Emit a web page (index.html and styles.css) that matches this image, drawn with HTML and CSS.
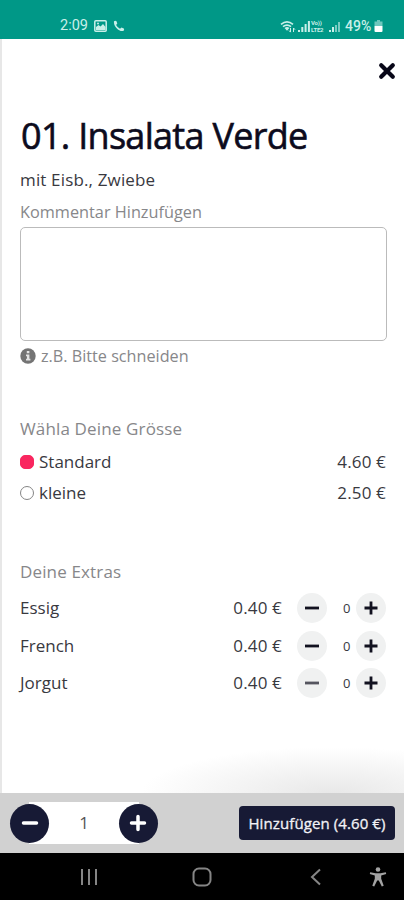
FILE: index.html
```html
<!DOCTYPE html>
<html lang="de">
<head>
<meta charset="utf-8">
<meta name="viewport" content="width=device-width, initial-scale=1">
<title>01. Insalata Verde</title>
<link rel="stylesheet" href="styles.css">
</head>
<body>
<header class="status">
  <span class="time">2:09</span>
  <svg class="photo" width="13" height="12" viewBox="0 0 13 12"><rect x=".8" y=".8" width="11.4" height="10.4" rx="1" fill="none" stroke="currentColor" stroke-width="1.5"/><path d="M2 10V7l2.500-2 2 1.500L9 4l2.500 3v3z" fill="currentColor"/><circle cx="4" cy="3.500" r="1" fill="currentColor"/></svg>
  <svg class="phone" width="12" height="12" viewBox="0 0 12 12"><path d="M1 1.300Q2.500.300 3.500 1.300l.8 2.200-1.200 1.400Q4.600 7.600 7 8.800l1.500-1.200 2.300.9q.8 1.200-.5 2.400C6.500 12.200.2 6.500 1 1.300z" fill="currentColor"/></svg>
  <span class="spacer"></span>
  <svg class="wifi" width="16" height="13" viewBox="0 0 16 13"><path d="M1 4.300Q7 -.5 13 4.300M3 6.600Q7 3.500 11 6.600" fill="none" stroke="currentColor" stroke-width="1.700"/><path d="M4.500 8Q7 6.200 9.500 8L7 10.800z" fill="currentColor"/><path d="M10.500 8v4M9 10.500l1.500 1.700M13.500 12V8m1.500 1.700L13.500 8" fill="none" stroke="currentColor"/></svg>
  <svg class="signal" width="12" height="12" viewBox="0 0 12 12" fill="currentColor"><path d="M0 10h2v2H0zM3.300 7h2v5h-2zM6.600 4h2v8h-2zM9.900 1h2v11h-2z"/></svg>
  <span class="volte"><span>Vo))</span><span>LTE2</span></span>
  <svg class="signal" width="12" height="12" viewBox="0 0 12 12" fill="currentColor"><path d="M1 10h2v2H1zM4 7h2v5H4z"/><path opacity=".6" d="M7 5h2v7H7zM10 2h2v10h-2z"/></svg>
  <span class="battery-text">49%</span>
  <svg class="battery" width="9" height="12" viewBox="0 0 9 12"><path opacity=".55" d="M3 0h3v1.500h2.500V6H.5V1.500H3z" fill="currentColor"/><path d="M.5 6h8v5q0 1-1 1h-6q-1 0-1-1z" fill="#fff"/></svg>
</header>

<main class="sheet">
  <button class="close" aria-label="Schließen"><svg width="18" height="18" viewBox="0 0 18 18"><path d="M3.200 3.200 14.800 14.800M14.800 3.200 3.200 14.800" stroke="currentColor" stroke-width="4.200" stroke-linecap="round"/></svg></button>
  <h1 class="title">01. Insalata Verde</h1>
  <p class="description">mit Eisb., Zwiebe</p>
  <label class="label comment-label" for="comment">Kommentar Hinzufügen</label>
  <textarea class="comment" id="comment"></textarea>
  <p class="hint"><svg width="16" height="16" viewBox="0 0 16 16"><circle cx="8" cy="8" r="7.700" fill="#747474"/><path d="M6.800 3h2.600v2.200H6.800zM6 6.500h3.400v4.300h1v1.700H6v-1.700h1V8.200H6z" fill="#e4e4e4"/></svg>z.B. Bitte schneiden</p>

  <h2 class="label size-label">Wähla Deine Grösse</h2>
  <div class="option"><span class="radio radio-on"></span><span class="name">Standard</span><span class="price">4.60 €</span></div>
  <div class="option"><span class="radio"></span><span class="name">kleine</span><span class="price">2.50 €</span></div>

  <h2 class="label extras-label">Deine Extras</h2>
  <div class="extra"><span class="name">Essig</span><span class="price">0.40 €</span><button class="step"><svg width="16" height="16" viewBox="0 0 16 16"><path d="M1 8h14"/></svg></button><span class="count">0</span><button class="step"><svg width="16" height="16" viewBox="0 0 16 16"><path d="M1.500 8h13M8 1.500v13"/></svg></button></div>
  <div class="extra"><span class="name">French</span><span class="price">0.40 €</span><button class="step"><svg width="16" height="16" viewBox="0 0 16 16"><path d="M1 8h14"/></svg></button><span class="count">0</span><button class="step"><svg width="16" height="16" viewBox="0 0 16 16"><path d="M1.500 8h13M8 1.500v13"/></svg></button></div>
  <div class="extra"><span class="name">Jorgut</span><span class="price">0.40 €</span><button class="step step-muted"><svg width="16" height="16" viewBox="0 0 16 16"><path d="M1 8h14"/></svg></button><span class="count">0</span><button class="step"><svg width="16" height="16" viewBox="0 0 16 16"><path d="M1.500 8h13M8 1.500v13"/></svg></button></div>
</main>

<footer class="cart">
  <div class="quantity">
    <button class="round"><svg width="18" height="18" viewBox="0 0 18 18"><path d="M2.500 9h13"/></svg></button>
    <span class="amount">1</span>
    <button class="round"><svg width="18" height="18" viewBox="0 0 18 18"><path d="M2.500 9h13M9 2.500v13"/></svg></button>
  </div>
  <button class="add">Hinzufügen (4.60 €)</button>
</footer>

<nav class="system">
  <svg width="18" height="18" viewBox="0 0 18 18"><path d="M2 1v16M9 1v16M16 1v16"/></svg>
  <svg width="20" height="20" viewBox="0 0 20 20"><rect x="1.500" y="1.500" width="17" height="17" rx="5.500"/></svg>
  <svg width="12" height="18" viewBox="0 0 12 18"><path d="M10 1.500 2 9l8 7.500"/></svg>
  <svg class="person" width="18" height="20" viewBox="0 0 18 20"><circle cx="9" cy="2.500" r="2.300"/><path d="M1.200 5.200 6.500 6.200h5l5.300-1 .4 1.900-5 1.300v3.300l2.500 7-1.900.8L9.800 13.500H8.200L5.200 19.500l-1.900-.8 2.500-7V8.400L.8 7.100z"/></svg>
</nav>
</body>
</html>
```
FILE: styles.css
```css
* { box-sizing: border-box; }
body {
  margin: 0;
  width: 404px;
  height: 900px;
  display: flex;
  flex-direction: column;
  overflow: hidden;
  background: #fff;
  color: #39393f;
  font: 17px/24px "Open Sans", "Noto Sans", sans-serif;
}
h1, h2, p { margin: 0; font-weight: 400; }
button { border: 0; padding: 0; font: inherit; color: inherit; background: none; display: flex; align-items: center; justify-content: center; }
svg { display: block; flex: none; }

.status {
  height: 39px;
  flex: none;
  display: flex;
  align-items: center;
  padding: 13px 21px 0 60px;
  background: #009887;
  color: #c9efe9;
  font: 14.500px/20px Roboto, sans-serif;
}
.time { width: 34px; }
.phone { margin-left: 6px; }
.spacer { flex: 1; }
.signal { margin-left: 2px; }
.volte { display: flex; flex-direction: column; width: 15px; margin-left: 1px; font-size: 6px; line-height: 7px; font-weight: 700; letter-spacing: -.2px; }
.battery-text { width: 29px; margin-left: 5px; font-weight: 500; font-size: 14px; }

.sheet {
  height: 754px;
  flex: none;
  display: flex;
  flex-direction: column;
  padding: 22px 18px 0 18px;
  border-left: 2px solid #e7e7e7;
  background: radial-gradient(ellipse 190px 46px at 330px 100%, #e8e8e8, #fff);
}
.close { align-self: flex-end; width: 18px; height: 18px; margin-right: -10px; margin-top: 1px; color: #080718; }
.title { margin: 31px 0 0 1px; height: 50px; line-height: 50px; font-size: 36px; letter-spacing: -.7px; color: #0c0b1d; -webkit-text-stroke: .6px #0c0b1d; white-space: nowrap; }
.description { margin-top: 7px; letter-spacing: .15px; }
.label { color: #87878a; font-size: 17px; line-height: 24px; letter-spacing: .15px; }
.comment-label { margin-top: 8px; font-size: 16.300px; letter-spacing: 0; }
.comment { width: 367px; height: 114px; margin-top: 3px; border: 1px solid #bbb; border-radius: 5px; resize: none; background: #fff; }
.hint { display: flex; align-items: center; gap: 5px; margin-top: 3px; color: #87878a; font-size: 16.200px; }
.size-label { margin-top: 49px; }
.option { display: flex; align-items: center; height: 31.500px; }
.size-label + .option { margin-top: 5px; }
.radio { width: 14px; height: 14px; margin-right: 5px; border: 1px solid #858585; border-radius: 50%; }
.radio-on { border-color: #f9265f; background: #f9265f; border-radius: 5px; }
.name { flex: 1; }
.price { letter-spacing: .15px; }
.extras-label { margin-top: 51px; margin-bottom: 5.500px; }
.extra { display: flex; align-items: center; height: 37.500px; }
.step { width: 30px; height: 30px; border-radius: 50%; background: #f0f1f1; color: #11111f; }
.step svg { fill: none; stroke: currentColor; stroke-width: 2.800; }
.extra .price + .step { margin-left: 15px; }
.step-muted { color: #55555f; }
.count { width: 29px; padding-left: 16px; font-size: 13px; }

.cart {
  height: 60px;
  flex: none;
  display: flex;
  align-items: center;
  justify-content: space-between;
  padding: 0 9px 0 10px;
  background: #d1d1d1;
}
.quantity { display: flex; align-items: center; justify-content: space-between; width: 148px; height: 42px; background: linear-gradient(#fff, #fff) center / 110px 42px no-repeat; }
.round { width: 39px; height: 39px; border-radius: 50%; background: #171a35; color: #fff; }
.round svg { fill: none; stroke: currentColor; stroke-width: 3.500; stroke-linecap: round; }
.amount { color: #555; }
.add { width: 156px; height: 34px; border-radius: 4px; background: #171a35; color: #f2f2f6; font-size: 15px; letter-spacing: .1px; -webkit-text-stroke: .3px #f2f2f6; white-space: nowrap; }

.system {
  height: 47px;
  flex: none;
  display: grid;
  grid-template-columns: 112px 118px 59px 18px;
  align-items: center;
  padding: 1px 17px 0 80px;
  background: #000;
}
.system svg { fill: none; stroke: #858585; stroke-width: 2; }
.system .person { fill: #a3a3a3; stroke: none; }
```
